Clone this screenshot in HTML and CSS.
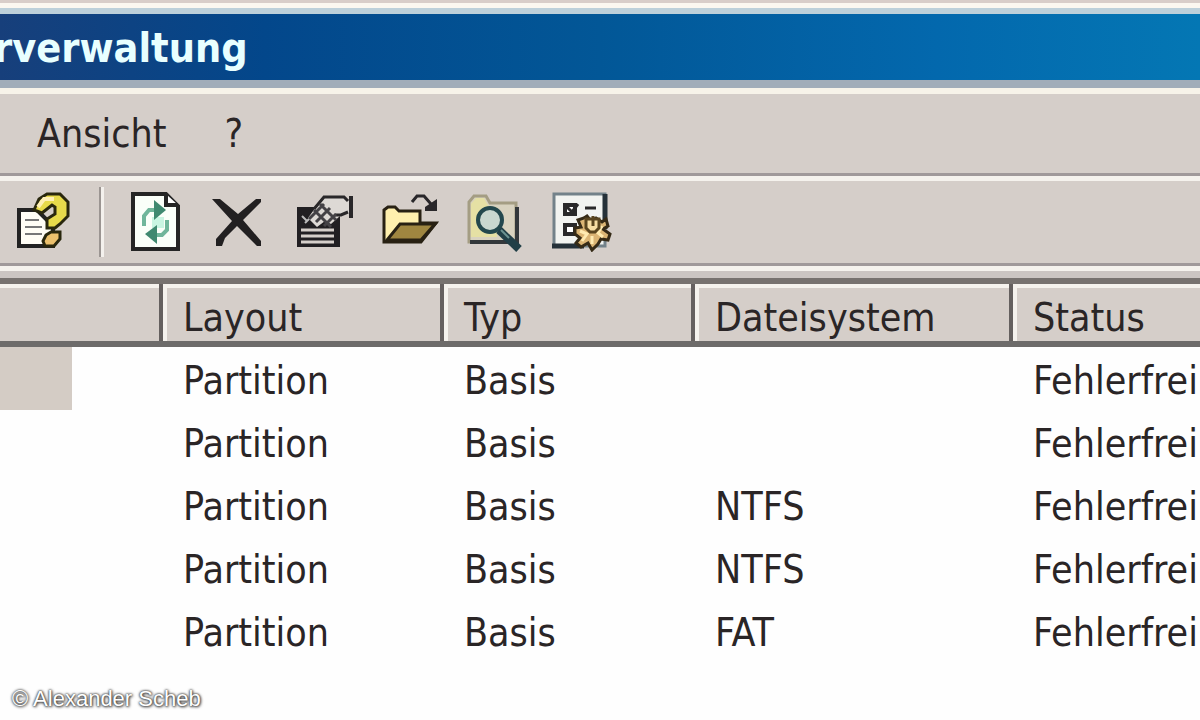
FILE: index.html
```html
<!DOCTYPE html>
<html lang="de">
  <head>
    <meta charset="utf-8">
    <title>Computerverwaltung</title>
    <link rel="stylesheet" href="styles.css">
  </head>
  <body>
    <div class="window">
      <header class="titlebar">
        <h1>rverwaltung</h1>
      </header>

      <nav class="menubar">
        <button class="menu-item">Ansicht</button>
        <button class="menu-item">?</button>
      </nav>

      <div class="toolbar">
        <button class="btn" aria-label="Hilfe">
          <svg class="icon" viewBox="0 0 60 60">
            <path d="M8 18H26L42 34V54H8Z" fill="#fffdf5" stroke="#222" stroke-width="4"/>
            <path d="M14 28H28M14 35H31M14 42H31" stroke="#777" stroke-width="2"/>
            <path d="M23 18L28 7L36 2H49L57 10V24L49 32L44 36H36V27L44 22V15L41 13L31 21Z" fill="#e7da4b" stroke="#29270d" stroke-width="3"/>
            <path d="M27 15L33 7H43" stroke="#fff0b4" stroke-width="4" fill="none"/>
            <path d="M35 43L40 40H49V47L43 54H34L32 49Z" fill="#ecc16d" stroke="#29270d" stroke-width="3"/>
          </svg>
        </button>
        <span class="separator"></span>
        <button class="btn" aria-label="Aktualisieren">
          <svg class="icon" viewBox="0 0 60 60">
            <path d="M6 2H39L51 14V57H6Z" fill="#fafff9" stroke="#252525" stroke-width="4"/>
            <path d="M39 2V13H51" fill="#fff" stroke="#252525" stroke-width="4"/>
            <path d="M25 25H37V36H25Z" fill="#c9f5e2"/>
            <path d="M17 34V24L22 18H28" fill="none" stroke="#70b69b" stroke-width="4"/>
            <path d="M27 8L39 18L27 28Z" fill="#3f8970"/>
            <path d="M40 28V38L35 43H29" fill="none" stroke="#70b69b" stroke-width="4"/>
            <path d="M30 33L18 42L30 52Z" fill="#3f8970"/>
          </svg>
        </button>
        <button class="btn" aria-label="Löschen">
          <svg class="icon" viewBox="0 0 60 60">
            <path d="M0 7H8L26 22L44 7H49V10L31 28L49 49V54H45L25 34L13 46L10 54H4V47L20 29Z" fill="#222021"/>
          </svg>
        </button>
        <button class="btn" aria-label="Eigenschaften">
          <svg class="icon" viewBox="0 0 60 60">
            <path d="M0 15H43V55H0Z" fill="#211f22"/>
            <path d="M4 38H37M4 44H37M4 50H37" stroke="#d5cfca" stroke-width="3"/>
            <path d="M5 24L10 29M8 31L17 22" stroke="#bbb" stroke-width="2"/>
            <path d="M11 26L26 5H48L53 9V20L43 24L34 32L28 29L20 35Z" fill="#ddd9d5"/>
            <path d="M17 17L27 5H47L51 9M51 20L44 23H38" fill="none" stroke="#292729" stroke-width="3"/>
            <path d="M54 4V26" stroke="#292729" stroke-width="4"/>
            <path d="M17 18L34 35M23 12L39 28M12 27L27 12M19 30L33 16M27 34L39 22" fill="none" stroke="#444246" stroke-width="3"/>
          </svg>
        </button>
        <button class="btn" aria-label="Öffnen">
          <svg class="icon" viewBox="0 0 60 60">
            <path d="M2 18L6 15H13L17 19H38V31H54L39 50H2Z" fill="#fff0ae" stroke="#282113" stroke-width="3"/>
            <path d="M18 32H53L39 48H5Z" fill="#9f8640" stroke="#282113" stroke-width="3"/>
            <path d="M30 10L35 4H42L49 12" fill="none" stroke="#29272a" stroke-width="3"/>
            <path d="M55 7V19H43V15Z" fill="#29272a"/>
          </svg>
        </button>
        <button class="btn" aria-label="Suchen">
          <svg class="icon" viewBox="0 0 60 60">
            <path d="M2 50V10L7 4H19L23 11H49V50Z" fill="#d8d2bf" stroke="#a49d83" stroke-width="3"/>
            <path d="M4 45V12L9 6H17L22 15H30V45Z" fill="#e5e0a4"/>
            <path d="M3 50H50V15" fill="none" stroke="#33383b" stroke-width="4"/>
            <circle cx="23" cy="28" r="12" fill="#c9d7cf" stroke="#23484d" stroke-width="4"/>
            <path d="M32 38L52 57" stroke="#213f47" stroke-width="8"/>
            <path d="M34 38L42 46" stroke="#6b9291" stroke-width="2"/>
          </svg>
        </button>
        <button class="btn" aria-label="Einstellungen">
          <svg class="icon" viewBox="0 0 60 60">
            <path d="M2 2H53V54H2Z" fill="#f2f4f1" stroke="#73828a" stroke-width="3"/>
            <path d="M0 54H32M53 2V37" fill="none" stroke="#253139" stroke-width="5"/>
            <path d="M13 13H23V22H13ZM13 33H23V42H13Z" fill="#fff" stroke="#29292a" stroke-width="4"/>
            <path d="M15 15L20 20L26 12M33 16H44" fill="none" stroke="#29292a" stroke-width="3"/>
            <path d="M35 24L39 29L44 26L50 30L54 27L56 34L51 37L58 42L56 48L49 47L46 52L40 58L36 51L29 55L24 51L28 46L23 42V36L29 35L26 28L32 26Z" fill="#dbb574" stroke="#352a16" stroke-width="3"/>
            <path d="M28 39L35 42L30 49M50 34L46 41L51 45M40 44V52" fill="none" stroke="#ffebb1" stroke-width="3"/>
            <path d="M34 27V36L38 40H43L47 36V27Z" fill="#f5dca2" stroke="#59451f" stroke-width="3"/>
            <path d="M41 24V34" stroke="#59451f" stroke-width="3"/>
          </svg>
        </button>
      </div>

      <table class="volumes">
        <colgroup>
          <col class="col-volume">
          <col class="col-layout">
          <col class="col-type">
          <col class="col-fs">
          <col>
        </colgroup>
        <thead>
          <tr><th></th><th>Layout</th><th>Typ</th><th>Dateisystem</th><th>Status</th></tr>
        </thead>
        <tbody>
          <tr><td><div class="selected"></div></td><td>Partition</td><td>Basis</td><td></td><td>Fehlerfrei</td></tr>
          <tr><td></td><td>Partition</td><td>Basis</td><td></td><td>Fehlerfrei</td></tr>
          <tr><td></td><td>Partition</td><td>Basis</td><td>NTFS</td><td>Fehlerfrei</td></tr>
          <tr><td></td><td>Partition</td><td>Basis</td><td>NTFS</td><td>Fehlerfrei</td></tr>
          <tr><td></td><td>Partition</td><td>Basis</td><td>FAT</td><td>Fehlerfrei</td></tr>
        </tbody>
      </table>
    </div>
    <p class="credit">© Alexander Scheb</p>
  </body>
</html>
```
FILE: styles.css
```css
* {
  box-sizing: border-box;
  margin: 0;
}
body {
  background-color: #fefefe;
  color: #2a2526;
  font-family: "DejaVu Sans Condensed", "DejaVu Sans", sans-serif;
  font-size: 39px;
  line-height: 48px;
  overflow: hidden;
}
.window {
  background-color: #d5cec9;
  border-top: 3px solid #d8cdc9;
}
.titlebar {
  border-top: 5px solid #fbf7f0;
  border-bottom: 6px solid #f7f3e9;
}
.titlebar h1 {
  height: 80px;
  padding: 10px 0;
  text-indent: -6px;
  background: linear-gradient(to right, #173f7b, #03478b 22%, #025797 50%, #0368ad 78%, #0477b4);
  border-top: 6px solid #bdd0da;
  border-bottom: 8px solid #a1adb9;
  color: #e8ffff;
  font-size: 41px;
  line-height: 48px;
}
button {
  border: none;
  background: none;
  color: inherit;
  font: inherit;
}
.menubar {
  display: flex;
  height: 82px;
  padding: 0 8px;
  border-bottom: 3px solid #a0999a;
}
.menu-item {
  padding: 0 29px;
}
.toolbar {
  display: flex;
  align-items: center;
  height: 90px;
  border-top: 5px solid #f5f2ed;
  border-bottom: 3px solid #a0999a;
}
.btn {
  display: flex;
  width: 85px;
  padding: 0 11px;
}
.icon {
  width: 60px;
  height: 60px;
  flex: none;
}
.separator {
  width: 5px;
  height: 70px;
  margin: 0 12px 0 14px;
  border-left: 2px solid #9b9592;
  border-right: 3px solid #f4f1ed;
}
.volumes {
  width: 100%;
  table-layout: fixed;
  border-collapse: separate;
  border-spacing: 0;
  border-top: 5px solid #f5f2ed;
  background-color: #fefefe;
}
.col-volume {
  width: 163px;
}
.col-layout {
  width: 281px;
}
.col-type {
  width: 251px;
}
.col-fs {
  width: 318px;
}
th,
td {
  padding: 4px 0 0 20px;
  font-weight: normal;
  text-align: left;
  white-space: nowrap;
}
/* groove above the column headings, then the raised heading itself */
th {
  height: 76px;
  padding-top: 24px;
  line-height: 46px;
  background: linear-gradient(#cbc5c2 7px, #77726f 7px, #77726f 13px, #f5f2ed 13px, #f5f2ed 17px, #d5cec9 17px);
  border-bottom: 6px solid #6d6b6a;
}
/* the divider between headings starts below the groove */
th:not(:last-child) {
  background:
    linear-gradient(#65605f, #65605f) right 13px / 4px 100% no-repeat,
    linear-gradient(#cbc5c2 7px, #77726f 7px, #77726f 13px, #f5f2ed 13px, #f5f2ed 17px, #d5cec9 17px);
}
th:not(:first-child) {
  background:
    linear-gradient(#f5f2ed, #f5f2ed) left 13px / 4px 100% no-repeat,
    linear-gradient(#65605f, #65605f) right 13px / 4px 100% no-repeat,
    linear-gradient(#cbc5c2 7px, #77726f 7px, #77726f 13px, #f5f2ed 13px, #f5f2ed 17px, #d5cec9 17px);
}
th:last-child:not(:first-child) {
  background:
    linear-gradient(#f5f2ed, #f5f2ed) left 13px / 4px 100% no-repeat,
    linear-gradient(#cbc5c2 7px, #77726f 7px, #77726f 13px, #f5f2ed 13px, #f5f2ed 17px, #d5cec9 17px);
}
td {
  height: 63px;
}
td:first-child {
  padding: 0;
}
.selected {
  width: 72px;
  height: 63px;
  background-color: #d4ccc5;
}
.credit {
  position: absolute;
  left: 12px;
  bottom: 8px;
  color: #fff;
  font-family: "Liberation Sans", Arial, sans-serif;
  font-size: 22px;
  line-height: 26px;
  text-shadow: 0 0 2px #333, 0 0 3px #555, 1px 1px 3px #555;
}
```
